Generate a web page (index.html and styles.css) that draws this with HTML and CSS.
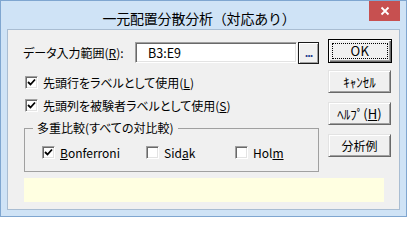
FILE: index.html
```html
<!DOCTYPE html>
<html lang="ja">
<head>
<meta charset="utf-8">
<title>一元配置分散分析（対応あり）</title>
<link rel="stylesheet" href="styles.css">
</head>
<body>
<div class="window">
  <div class="titlebar">
    <div class="title">一元配置分散分析（対応あり）</div>
    <div class="close">
      <svg width="10" height="10" viewBox="0 0 10 10"><path d="M1.5 1.5 L8.5 8.5 M8.5 1.5 L1.5 8.5" stroke="#fff" stroke-width="1.8" fill="none"/></svg>
    </div>
  </div>
  <div class="client">
    <div class="main">
      <div class="left">
        <div class="range-row">
          <span class="range-label">データ入力範囲(<u>R</u>):</span>
          <div class="textbox">B3:E9</div>
          <div class="browse">...</div>
        </div>
        <div class="check-row first">
          <span class="box"><svg width="9" height="9" viewBox="0 0 9 9"><path d="M1 4 L3.5 6.5 L8 1.5" stroke="#000" stroke-width="1.8" fill="none"/></svg></span>
          <span class="check-text">先頭行をラベルとして使用(<u>L</u>)</span>
        </div>
        <div class="check-row second">
          <span class="box"><svg width="9" height="9" viewBox="0 0 9 9"><path d="M1 4 L3.5 6.5 L8 1.5" stroke="#000" stroke-width="1.8" fill="none"/></svg></span>
          <span class="check-text">先頭列を被験者ラベルとして使用(<u>S</u>)</span>
        </div>
        <fieldset class="group">
          <legend>多重比較(すべての対比較)</legend>
          <div class="group-items">
            <div class="check-row">
              <span class="box"><svg width="9" height="9" viewBox="0 0 9 9"><path d="M1 4 L3.5 6.5 L8 1.5" stroke="#000" stroke-width="1.8" fill="none"/></svg></span>
              <span class="check-text"><u>B</u>onferroni</span>
            </div>
            <div class="check-row">
              <span class="box"></span>
              <span class="check-text">Sid<u>a</u>k</span>
            </div>
            <div class="check-row">
              <span class="box"></span>
              <span class="check-text">Hol<u>m</u></span>
            </div>
          </div>
        </fieldset>
      </div>
      <div class="buttons">
        <div class="btn default"><span class="focus">OK</span></div>
        <div class="btn half">ｷｬﾝｾﾙ</div>
        <div class="btn half">ﾍﾙﾌﾟ(<u>H</u>)</div>
        <div class="btn">分析例</div>
      </div>
    </div>
    <div class="status"></div>
  </div>
</div>
</body>
</html>
```

FILE: styles.css
```css
html, body {
  margin: 0;
  padding: 0;
}
body {
  width: 407px;
  height: 217px;
  overflow: hidden;
  font-family: "Noto Sans CJK JP", "Noto Sans", sans-serif;
  font-size: 12px;
  color: #000;
}
u {
  text-decoration: underline;
  text-underline-offset: 1px;
}
.window {
  box-sizing: border-box;
  width: 407px;
  height: 217px;
  background: #cfe3f6;
  border: 1px solid #7fa6d0;
  display: flex;
  flex-direction: column;
}
.titlebar {
  height: 28px;
  display: flex;
  align-items: flex-start;
}
.title {
  flex: 1;
  padding-left: 28px;
  text-align: center;
  font-size: 14px;
  letter-spacing: -0.2px;
  line-height: 16px;
  margin-top: 9px;
  color: #000;
}
.close {
  width: 31px;
  height: 20px;
  margin-right: 6px;
  background: #c75050;
  display: flex;
  align-items: center;
  justify-content: center;
}
.close svg {
  display: block;
}
.client {
  box-sizing: border-box;
  height: 181px;
  margin: 0 6px;
  background: #f0f0f0;
  border: 1px solid #a9bdd2;
  padding: 9px 7px 0 16px;
  font-feature-settings: "palt";
}
.main {
  display: flex;
  align-items: flex-start;
}
.left {
  width: 295px;
  display: flex;
  flex-direction: column;
}
.range-row {
  margin-top: 3px;
  height: 21px;
  display: flex;
  align-items: center;
}
.range-label {
  width: 112px;
  line-height: 14px;
  margin-left: -1px;
}
.textbox {
  box-sizing: border-box;
  width: 162px;
  height: 21px;
  background: #fff;
  border-top: 1px solid #a0a0a0;
  border-left: 1px solid #a0a0a0;
  border-right: 1px solid #fff;
  border-bottom: 1px solid #fff;
  box-shadow: inset 1px 1px 0 #696969, inset -1px -1px 0 #e3e3e3;
  padding-left: 12px;
  line-height: 19px;
  font-size: 12.5px;
}
.browse {
  box-sizing: border-box;
  width: 21px;
  height: 22px;
  margin-left: 1px;
  border: 1px solid #1a1a1a;
  box-shadow: inset 1px 1px 0 #fff, inset -1px -1px 0 #a0a0a0;
  background: #f0f0f0;
  text-align: center;
  line-height: 18px;
  font-size: 11px;
  font-weight: bold;
  letter-spacing: -1px;
  color: #1d3d8c;
}
.check-row {
  height: 13px;
  display: flex;
  align-items: center;
}
.check-row.first {
  margin-top: 13px;
  margin-left: 1px;
}
.check-row.second {
  margin-top: 10px;
  margin-left: 1px;
}
.box {
  box-sizing: border-box;
  width: 13px;
  height: 13px;
  background: #fff;
  border-top: 1px solid #a0a0a0;
  border-left: 1px solid #a0a0a0;
  border-right: 1px solid #fff;
  border-bottom: 1px solid #fff;
  box-shadow: inset 1px 1px 0 #696969, inset -1px -1px 0 #e3e3e3;
  display: flex;
  align-items: center;
  justify-content: center;
  flex: none;
}
.box svg {
  display: block;
}
.check-text {
  margin-left: 5px;
  line-height: 14px;
  white-space: nowrap;
}
.group {
  box-sizing: border-box;
  margin: 9px 0 0 0;
  width: 295px;
  height: 51px;
  border: 1px solid #a0a0a0;
  padding: 0 0 0 8px;
}
.group legend {
  padding: 0 4px;
  line-height: 14px;
  height: 14px;
}
.group-items {
  margin-top: 11px;
  margin-left: 9px;
  display: grid;
  grid-template-columns: 104px 89px auto;
}
.buttons {
  margin-left: 9px;
  width: 64px;
  display: flex;
  flex-direction: column;
}
.btn {
  box-sizing: border-box;
  width: 63px;
  height: 23px;
  margin-top: 9px;
  background: #f0f0f0;
  border-top: 1px solid #e3e3e3;
  border-left: 1px solid #e3e3e3;
  border-right: 1px solid #696969;
  border-bottom: 1px solid #696969;
  box-shadow: inset 1px 1px 0 #fff, inset -1px -1px 0 #a0a0a0;
  display: flex;
  align-items: center;
  justify-content: center;
  line-height: 14px;
  white-space: nowrap;
}
.btn.half {
  font-size: 13px;
}
.btn.default {
  width: 64px;
  height: 24px;
  margin-top: 0;
  border: 1px solid #000;
  box-shadow: inset 1px 1px 0 #fff, inset -1px -1px 0 #696969, inset -2px -2px 0 #a0a0a0;
  padding: 3px;
  margin-bottom: -1px;
}
.btn.default + .btn {
  margin-top: 8px;
}
.focus {
  box-sizing: border-box;
  width: 100%;
  height: 100%;
  border: 1px dotted #000;
  display: flex;
  align-items: center;
  justify-content: center;
  font-size: 13px;
  letter-spacing: 0.5px;
}
.status {
  width: 360px;
  height: 24px;
  margin-top: 6px;
  background: #ffffe1;
}
```
